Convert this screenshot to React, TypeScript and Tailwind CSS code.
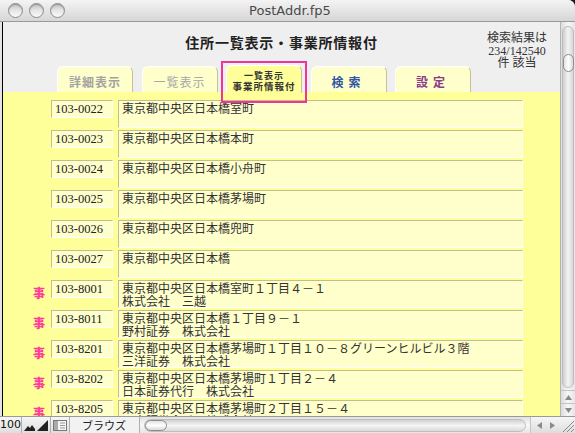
import React from "react";

const JP = "font-['Noto_Sans_CJK_JP',sans-serif]";
const SERIF_JP = "font-['Liberation_Serif','Noto_Sans_CJK_JP',serif]";

interface Row {
  zip: string;
  lines: string[];
  office?: boolean;
}

const ROWS: Row[] = [
  { zip: "103-0022", lines: ["東京都中央区日本橋室町"] },
  { zip: "103-0023", lines: ["東京都中央区日本橋本町"] },
  { zip: "103-0024", lines: ["東京都中央区日本橋小舟町"] },
  { zip: "103-0025", lines: ["東京都中央区日本橋茅場町"] },
  { zip: "103-0026", lines: ["東京都中央区日本橋兜町"] },
  { zip: "103-0027", lines: ["東京都中央区日本橋"] },
  { zip: "103-8001", office: true, lines: ["東京都中央区日本橋室町１丁目４－１", "株式会社　三越"] },
  { zip: "103-8011", office: true, lines: ["東京都中央区日本橋１丁目９－１", "野村証券　株式会社"] },
  { zip: "103-8201", office: true, lines: ["東京都中央区日本橋茅場町１丁目１０－８グリーンヒルビル３階", "三洋証券　株式会社"] },
  { zip: "103-8202", office: true, lines: ["東京都中央区日本橋茅場町１丁目２－４", "日本証券代行　株式会社"] },
  { zip: "103-8205", office: true, lines: ["東京都中央区日本橋茅場町２丁目１５－４", "日本証券金融　株式会社"] },
];

// small grey arrow used by the scroll bars
const Arrow = ({ dir }: { dir: "up" | "down" | "left" | "right" }) => {
  const d = {
    up: "M0 6 L3.5 1 L7 6 Z",
    down: "M0 1 L7 1 L3.5 6 Z",
    left: "M6 0 L6 7 L1 3.5 Z",
    right: "M1 0 L6 3.5 L1 7 Z",
  }[dir];
  return (
    <svg width="7" height="7" viewBox="0 0 7 7">
      <path d={d} fill="#8a8a8a" />
    </svg>
  );
};

const TitleBar = () => (
  <div className="flex h-[22px] shrink-0 items-center border-b border-[#9a9a9a] bg-gradient-to-b from-[#f4f4f4] to-[#d6d6d6]">
    <div className="flex items-center gap-[6px] pl-[8px]">
      {[0, 1, 2].map((i) => (
        <span
          key={i}
          className="h-[15px] w-[15px] rounded-full border border-[#8c8c8c] bg-gradient-to-b from-[#c4c4c4] via-[#e6e6e6] to-[#fafafa] shadow-[inset_0_1px_1px_rgba(0,0,0,0.25)]"
        />
      ))}
    </div>
    <div className="-ml-[60px] flex-1 text-center font-['DejaVu_Sans',sans-serif] text-[13px] text-[#4a4a4a]">
      PostAddr.fp5
    </div>
  </div>
);

const Tab = ({
  label,
  className,
}: {
  label: string;
  className: string;
}) => (
  <div className="flex h-[27px] w-[76px] items-center justify-center rounded-t-[6px] border-l border-t border-r border-l-white border-t-white border-r-[#c6bf9a] bg-[#ffffcc] pt-[3px]">
    <span className={`${JP} font-bold text-[12px] ${className}`}>{label}</span>
  </div>
);

const Header = () => (
  <div className="h-[70px] shrink-0 bg-[#efefef]">
    <div className="grid h-[43px] grid-cols-[1fr_auto_1fr]">
      <div />
      <h1 className={`${JP} pt-[11px] text-[14px] font-bold leading-[18px] tracking-[0.8px] text-[#222]`}>
        住所一覧表示・事業所情報付
      </h1>
      <div className={`${SERIF_JP} justify-self-end pr-[13px] pt-[10px] text-center text-[12px] leading-[12.5px] text-[#333]`}>
        <p>検索結果は</p>
        <p>234/142540</p>
        <p>件 該当</p>
      </div>
    </div>
    <div className="flex items-end gap-[8.5px] pl-[54px]">
      <Tab label="詳細表示" className="tracking-[1px] text-[#a3a3a3]" />
      <Tab label="一覧表示" className="font-normal tracking-[1px] text-[#a8a8a8]" />
      {/* current tab */}
      <div className="relative flex h-[28px] w-[76px] flex-col items-center justify-center rounded-t-[6px] border-l border-t border-r border-l-white border-t-white border-r-[#c6bf9a] bg-[#ffff99] pt-[3px]">
        <span className={`${JP} text-[9px] font-bold leading-[10px] tracking-[1px] text-[#333]`}>一覧表示</span>
        <span className={`${JP} text-[9.5px] font-bold leading-[10px] tracking-[1px] text-[#333]`}>事業所情報付</span>
        <span className="pointer-events-none absolute -bottom-[10px] -left-[6px] -right-[6px] -top-[5px] border-2 border-[#f0359a]" />
      </div>
      <Tab label="検索" className="tracking-[5px] text-[#2f56a6]" />
      <Tab label="設定" className="tracking-[5px] text-[#8a3a86]" />
    </div>
  </div>
);

const Field = ({ className, children }: { className: string; children: React.ReactNode }) => (
  <div className={`border border-b-white border-l-[#c4bd8e] border-r-white border-t-[#c4bd8e] bg-[#ffffcc] text-[#333] ${className}`}>
    {children}
  </div>
);

const RecordRow = ({ row }: { row: Row }) => (
  <div className="flex h-[28px] items-start">
    <div className="w-[48px] pr-[6px] text-right">
      {row.office && (
        <span className={`${JP} text-[12px] font-black leading-[16px] text-[#ff3d9a]`}>事</span>
      )}
    </div>
    <Field className="flex h-[18px] w-[62px] items-center pl-[3px]">
      <span className="font-['Liberation_Serif',serif] text-[12.5px] leading-[14px] text-[#222]">{row.zip}</span>
    </Field>
    <Field className={`${JP} ml-[5px] h-[28px] w-[405px] pl-[3px] text-[12px] leading-[13px]`}>
      {row.lines.map((l) => (
        <p key={l} className="whitespace-nowrap">{l}</p>
      ))}
    </Field>
  </div>
);

const VScroll = () => (
  <div className="flex w-[15px] shrink-0 flex-col border-l border-[#b5b5b5] bg-gradient-to-r from-[#dcdcdc] via-[#f7f7f7] to-[#e6e6e6]">
    <div className="flex flex-1 flex-col px-[1px] pb-[2px] pt-[4px]">
      <div className="flex flex-1 flex-col rounded-full border border-[#bdbdbd] bg-gradient-to-r from-[#cfcfcf] via-[#f4f4f4] to-[#d8d8d8] pt-[27px]">
        <div className="mx-auto h-[18px] w-[11px] rounded-full border border-[#8d8d8d] bg-gradient-to-r from-[#e2e2e2] via-[#ffffff] to-[#d9d9d9]" />
      </div>
    </div>
    <div className="flex h-[13px] items-center justify-center border-t border-[#c4c4c4]">
      <Arrow dir="up" />
    </div>
    <div className="flex h-[13px] items-center justify-center border-t border-[#c4c4c4]">
      <Arrow dir="down" />
    </div>
  </div>
);

const BottomBar = () => (
  <div className="flex h-[17px] shrink-0 items-stretch border-t border-[#9a9a9a] bg-gradient-to-b from-[#f6f6f6] to-[#dedede]">
    <div className="flex w-[22px] items-center justify-center border-r border-[#b0b0b0] font-['DejaVu_Sans',sans-serif] text-[11px] text-[#111]">100</div>
    <div className="flex items-end gap-[2px] border-r border-[#b0b0b0] px-[2px] pb-[2px]">
      <svg width="11" height="9" viewBox="0 0 11 9">
        <path d="M0 9 L4 4 L6 6 L8 3 L11 7 L11 9 Z" fill="#222" />
      </svg>
      <svg width="11" height="11" viewBox="0 0 11 11">
        <path d="M0 11 L11 0 L11 11 Z" fill="#222" />
      </svg>
    </div>
    <div className="flex items-center border-r border-[#b0b0b0] px-[2px]">
      <svg width="14" height="11" viewBox="0 0 14 11">
        <rect x="0.5" y="0.5" width="13" height="10" fill="#f4f4f4" stroke="#777" />
        <rect x="1" y="1" width="4" height="9" fill="#aaa" />
        <path d="M7 3 H12 M7 5.5 H12 M7 8 H12" stroke="#999" />
      </svg>
    </div>
    <div className={`${JP} flex w-[70px] items-center border-r border-[#b0b0b0] bg-[#f2f2f2] pl-[12px] text-[11px] text-[#222]`}>ブラウズ</div>
    <div className="flex flex-1 items-center bg-gradient-to-b from-[#e2e2e2] via-[#f8f8f8] to-[#e6e6e6] px-[4px]">
      <div className="flex h-[13px] flex-1 items-center rounded-full border border-[#bdbdbd] bg-gradient-to-b from-[#d2d2d2] via-[#f4f4f4] to-[#dadada]">
        <div className="h-[11px] w-[22px] rounded-full border border-[#8d8d8d] bg-gradient-to-b from-[#e2e2e2] via-[#ffffff] to-[#d9d9d9]" />
      </div>
    </div>
    <div className="flex w-[30px] items-center justify-center gap-[6px] border-l border-[#c4c4c4]">
      <Arrow dir="left" />
      <Arrow dir="right" />
    </div>
    <div className="flex w-[15px] items-end justify-end p-[1px]">
      <svg width="12" height="12" viewBox="0 0 12 12">
        <path d="M12 1 L1 12 M12 5 L5 12 M12 9 L9 12" stroke="#8a8a8a" />
      </svg>
    </div>
  </div>
);

export default function App() {
  return (
    <div className="h-[433px] w-[575px] overflow-hidden bg-[#1a1a1a]">
      <div className="flex h-full flex-col overflow-hidden rounded-tr-[7px] bg-[#e4e4e4]">
        <TitleBar />
        <div className="flex min-h-0 flex-1">
          <div className="ml-[2px] flex min-w-0 flex-1 flex-col border-l border-black">
            <Header />
            <div className="flex min-h-0 flex-1 flex-col gap-[2px] overflow-hidden bg-[#ffff99] pt-[8px]">
              {ROWS.map((r) => (
                <RecordRow key={r.zip} row={r} />
              ))}
            </div>
          </div>
          <VScroll />
        </div>
        <BottomBar />
      </div>
    </div>
  );
}
